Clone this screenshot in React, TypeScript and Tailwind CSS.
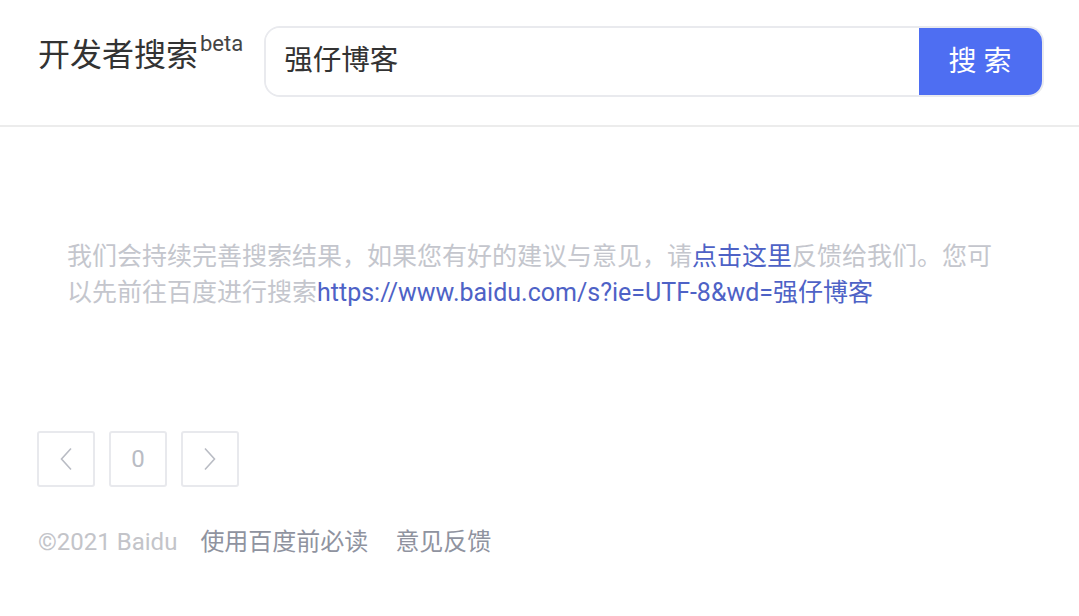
import { FunctionComponent } from "react";

const font = { fontFamily: 'Roboto, "Noto Sans CJK SC", sans-serif' };

const PageBox: FunctionComponent<{ children: React.ReactNode }> = ({ children }) => (
  <div className="flex h-[56px] w-[58px] items-center justify-center rounded-[3px] border-2 border-[#e8e9ed] text-[24px] text-[#b9bcc4]">
    {children}
  </div>
);

export default function App() {
  const query = "强仔博客";

  return (
    <div className="min-h-[616px] bg-white" style={font}>
      <header className="flex h-[127px] items-start border-b-2 border-[#ececec] pl-[38px] pr-[35px] pt-[26px]">
        <h1 className="mt-[9px] flex shrink-0 items-start text-[32px] font-normal leading-[40px] text-[#333]">
          开发者搜索
          <sup className="-mt-[6px] top-0 ml-[2px] text-[22px] leading-[30px] text-[#444]">beta</sup>
        </h1>
        <div className="ml-[21px] flex h-[71px] flex-1 overflow-hidden rounded-[16px] border-2 border-[#e9eaee]">
          <input
            className="min-w-0 flex-1 bg-white pl-[18px] text-[28.5px] text-[#333] outline-none"
            defaultValue={query}
            style={font}
          />
          <button className="-my-[2px] -mr-[2px] w-[125px] bg-[#4e6ef2] pl-[4px] text-[28px] tracking-[7px] text-white">
            搜索
          </button>
        </div>
      </header>

      <main className="px-[67px] pt-[112px]">
        <p className="text-[25px] leading-[36px] text-[#c4c6cd]">
          我们会持续完善搜索结果，如果您有好的建议与意见，请
          <a className="text-[#4e62c6]">点击这里</a>
          反馈给我们。您可以先前往百度进行搜索
          <a className="text-[#4e62c6]">https://www.baidu.com/s?ie=UTF-8&amp;wd={query}</a>
        </p>
      </main>

      <nav className="mt-[120px] flex gap-[14px] pl-[37px]">
        <PageBox>
          <svg width="12" height="24" viewBox="0 0 12 24" fill="none">
            <path d="M11 1.5 L1.5 12 L11 22.5" stroke="#b9bcc4" strokeWidth="1.6" />
          </svg>
        </PageBox>
        <PageBox>0</PageBox>
        <PageBox>
          <svg width="12" height="24" viewBox="0 0 12 24" fill="none">
            <path d="M1 1.5 L10.5 12 L1 22.5" stroke="#b9bcc4" strokeWidth="1.6" />
          </svg>
        </PageBox>
      </nav>

      <footer className="mt-[39px] flex gap-[23px] pl-[38px] text-[24px] leading-[32px]">
        <span className="text-[#c3c4c9]">©2021 Baidu</span>
        <a className="text-[#8f939f]">使用百度前必读</a>
        <a className="ml-[4px] text-[#8f939f]">意见反馈</a>
      </footer>
    </div>
  );
}
